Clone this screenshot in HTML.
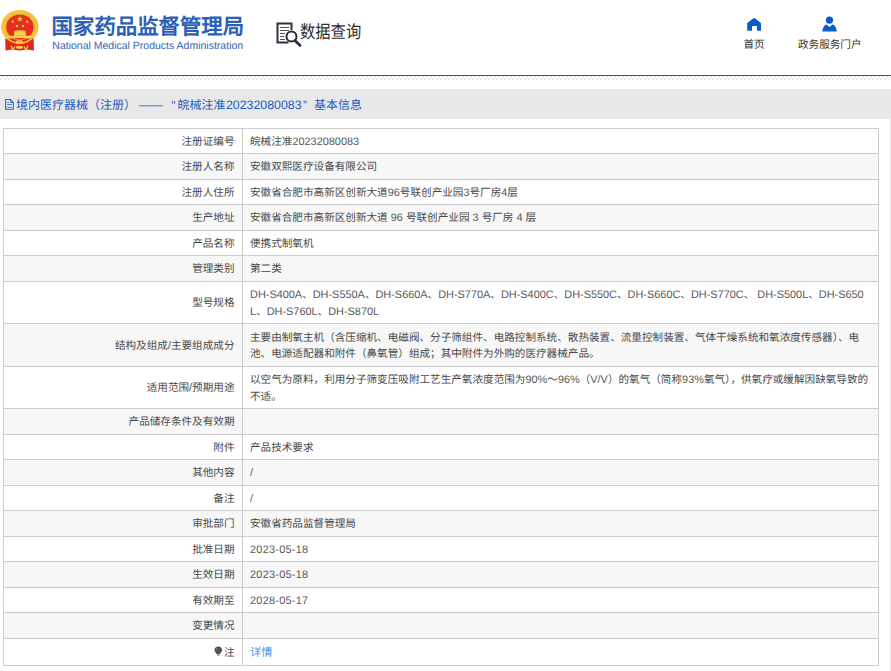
<!DOCTYPE html>
<html lang="zh-CN">
<head>
<meta charset="utf-8">
<style>
@font-face{font-family:"LSX";src:local("Liberation Sans");size-adjust:103%;unicode-range:U+0020-007E}
@font-face{font-family:"LSX";font-weight:bold;src:local("Liberation Sans Bold");size-adjust:103%;unicode-range:U+0020-007E}
*{margin:0;padding:0;box-sizing:border-box}
html,body{width:891px;height:671px;overflow:hidden;background:#fff}
body{position:relative;font-family:"LSX","Liberation Sans",sans-serif;color:#484848;text-rendering:geometricPrecision}
.abs{position:absolute}
#title{left:51.6px;top:13.9px;font-size:21.4px;font-weight:bold;color:#2c60b4;white-space:nowrap;line-height:26px}
#eng{left:52.3px;top:40.4px;font-size:10.2px;color:#3563b3;white-space:nowrap;line-height:12px}
#sj{left:300px;top:19.5px;font-size:17.8px;font-weight:300;color:#2c2c2c;line-height:24px;white-space:nowrap;transform:scaleX(0.86);transform-origin:0 0}
.nav{font-size:10.6px;font-weight:300;color:#333;line-height:14px;white-space:nowrap}
#blue{left:0;top:74.7px;width:891px;height:1.5px;background:#0b5ec1}
#hatch{left:0;top:76.4px;width:891px;height:3.7px;background:repeating-linear-gradient(135deg,transparent 0,transparent 2.15px,#dadada 2.15px,#dadada 2.83px)}
#bar{left:0;top:89px;width:891px;height:29.5px;background:#e8e8e8}
.cr{position:absolute;top:96.8px;font-size:12px;font-weight:300;color:#1a5cc0;line-height:16px;white-space:nowrap}
#cont{left:0;top:118.5px;width:891px;height:560px;border-right:1px solid #e4e4e4}
.row{position:absolute;left:3px;width:876px;border:1px solid #ccc;border-bottom:none}
.row.g{background:#f7f7f7}
.row .l{position:absolute;left:0;top:0;bottom:0;width:238px;display:flex;align-items:center;justify-content:flex-end;padding-right:7.5px;font-size:10.6px;font-weight:300;white-space:nowrap;line-height:16.8px}
.row .v{position:absolute;left:238px;top:0;bottom:0;right:0;border-left:1px solid #ccc;display:flex;align-items:center;padding-left:7px;font-size:10.6px;font-weight:300;line-height:16.8px;white-space:nowrap}
.row .v>div,.row .l>span{position:relative;top:1.4px}
.dt{letter-spacing:0.25px;color:#5a5a5a}
.lt{color:#5a5a5a}
.link{color:#4797f2;font-size:11.2px;position:relative;top:-0.4px}
.bulb{position:relative;top:1px;margin-right:1px}
#tbot{left:3px;top:665px;width:876px;height:1px;background:#ccc}
</style>
</head>
<body>
<svg class="abs" style="left:0;top:0" width="42" height="54" viewBox="0 0 42 54">
  <ellipse cx="19.85" cy="26.8" rx="18.8" ry="16.8" fill="#f4c23c"/>
  <path d="M5.2 38.6 L33.6 38.6 L34 50.6 L27.5 49.6 Q19.5 51.2 11.5 49.6 L5.6 50.6 Z" fill="#e4231c"/>
  <ellipse cx="19.9" cy="27" rx="13.8" ry="12.6" fill="#ea2c24"/>
  <ellipse cx="19.9" cy="27" rx="14.3" ry="13.1" fill="none" stroke="#e0a828" stroke-width="0.9"/>
  <polygon points="19.8,15.9 20.65,18.0 22.9,18.1 21.15,19.5 21.75,21.7 19.8,20.45 17.85,21.7 18.45,19.5 16.7,18.1 18.95,18.0" fill="#e6c83c"/>
  <circle cx="12.8" cy="21.7" r="1.25" fill="#dcc440"/><circle cx="27.1" cy="21.7" r="1.25" fill="#dcc440"/>
  <circle cx="17" cy="26" r="1.25" fill="#dcc440"/><circle cx="23" cy="26" r="1.25" fill="#dcc440"/>
  <rect x="14.1" y="31.2" width="11.7" height="4.6" fill="#f7d34c"/>
  <rect x="15.5" y="30.4" width="8.9" height="1.2" fill="#f5cf48"/>
  <rect x="8.9" y="35.8" width="22.2" height="2.3" fill="#f7d54a"/>
  <path d="M5.6 37.2 Q19.5 49.5 33.4 37.2" fill="none" stroke="#f2c43a" stroke-width="1.7"/>
  <ellipse cx="19.4" cy="42" rx="3.6" ry="2.1" fill="#f4c83e"/>
  <ellipse cx="19.4" cy="42" rx="1.6" ry="0.8" fill="#e8a830"/>
  <path d="M11 45.8 L13.2 49.8 L14.8 46.4 M28 45.8 L25.8 49.8 L24.2 46.4" fill="none" stroke="#f2d040" stroke-width="1.2"/>
  <ellipse cx="19.5" cy="47.2" rx="3.6" ry="1.5" fill="#f2d040"/>
</svg>
<div id="title" class="abs">国家药品监督管理局</div>
<div id="eng" class="abs">National Medical Products Administration</div>
<svg class="abs" style="left:275.7px;top:21.8px" width="27" height="26" viewBox="0 0 27 26">
  <path d="M12.5 20.5 H1.5 V1.5 H15.5 V8" fill="none" stroke="#2f2f3f" stroke-width="2"/>
  <path d="M4 5.5h9M4 8.5h9M4 11.5h5M4 14.5h4M4 17.5h5" stroke="#555" stroke-width="1.2"/>
  <circle cx="15.5" cy="14.5" r="5" fill="none" stroke="#2a2a3a" stroke-width="2"/>
  <path d="M19 18.5 L24 23.5" stroke="#2a2a3a" stroke-width="2.6" stroke-linecap="round"/>
</svg>
<div id="sj" class="abs">数据查询</div>
<svg class="abs" style="left:747px;top:17px" width="15" height="14" viewBox="0 0 15 14">
  <path d="M7.2 0.8 L14 6 V13.8 H10 V9 H5 V13.8 H0.2 V6 Z" fill="#0b5ec8"/>
</svg>
<div class="abs nav" style="left:743.5px;top:38px">首页</div>
<svg class="abs" style="left:822px;top:16px" width="16" height="16" viewBox="0 0 16 16">
  <circle cx="7.5" cy="4.2" r="3.6" fill="#0b5ec8"/>
  <path d="M0.3 15.5 Q1 9.5 4.5 8.6 L7.5 11 L10.5 8.6 Q14 9.5 14.8 15.5 Z" fill="#0b5ec8"/>
</svg>
<div class="abs nav" style="left:798px;top:38px">政务服务门户</div>
<div id="blue" class="abs"></div>
<div id="hatch" class="abs"></div>
<div id="bar" class="abs"></div>
<svg class="abs" style="left:4px;top:98px" width="11" height="13" viewBox="0 0 11 13">
  <path d="M1.6 1.5 H6.6 L9.3 4.3 V11.3 H1.6 Z" fill="none" stroke="#2563d0" stroke-width="1.05" stroke-linejoin="round"/>
  <path d="M6.6 1.5 V4.5 H9.3" fill="none" stroke="#2563d0" stroke-width="0.9"/>
  <path d="M3.1 4.4 H5 M3.1 6.5 H7.9 M3.1 9.3 H7.9" stroke="#3a6ad0" stroke-width="0.9"/>
</svg>
<div class="cr" style="left:16px">境内医疗器械（注册）</div>
<div class="cr" style="left:139px">——</div>
<div class="cr" style="left:171.5px">“</div>
<div class="cr" style="left:177.5px">皖械注准</div>
<div class="cr" style="left:226px">20232080083</div>
<div class="cr" style="left:303px">”</div>
<div class="cr" style="left:314px">基本信息</div>
<div id="cont" class="abs"></div>
<div class="row" style="top:128px;height:25px"><div class="l"><span>注册证编号</span></div><div class="v"><div>皖械注准<span class=lt>20232080083</span></div></div></div>
<div class="row g" style="top:153px;height:26px"><div class="l"><span>注册人名称</span></div><div class="v"><div>安徽双熙医疗设备有限公司</div></div></div>
<div class="row" style="top:179px;height:25px"><div class="l"><span>注册人住所</span></div><div class="v"><div>安徽省合肥市高新区创新大道<span class=lt>96</span>号联创产业园<span class=lt>3</span>号厂房<span class=lt>4</span>层</div></div></div>
<div class="row g" style="top:204px;height:26px"><div class="l"><span>生产地址</span></div><div class="v"><div>安徽省合肥市高新区创新大道<span class=lt> 96 </span>号联创产业园<span class=lt> 3 </span>号厂房<span class=lt> 4 </span>层</div></div></div>
<div class="row" style="top:230px;height:25px"><div class="l"><span>产品名称</span></div><div class="v"><div>便携式制氧机</div></div></div>
<div class="row g" style="top:255px;height:26px"><div class="l"><span>管理类别</span></div><div class="v"><div>第二类</div></div></div>
<div class="row" style="top:281px;height:42px"><div class="l"><span>型号规格</span></div><div class="v"><div><span class=lt>DH-S400A</span>、<span class=lt>DH-S550A</span>、<span class=lt>DH-S660A</span>、<span class=lt>DH-S770A</span>、<span class=lt>DH-S400C</span>、<span class=lt>DH-S550C</span>、<span class=lt>DH-S660C</span>、<span class=lt>DH-S770C</span>、<span class=lt> DH-S500L</span>、<span class=lt>DH-S650</span><br><span class=lt>L</span>、<span class=lt>DH-S760L</span>、<span class=lt>DH-S870L</span></div></div></div>
<div class="row g" style="top:323px;height:43px"><div class="l"><span>结构及组成/主要组成成分</span></div><div class="v"><div>主要由制氧主机（含压缩机、电磁阀、分子筛组件、电路控制系统、散热装置、流量控制装置、气体干燥系统和氧浓度传感器）、电<br>池、电源适配器和附件（鼻氧管）组成；其中附件为外购的医疗器械产品。</div></div></div>
<div class="row" style="top:366px;height:42px"><div class="l"><span>适用范围/预期用途</span></div><div class="v"><div>以空气为原料，利用分子筛变压吸附工艺生产氧浓度范围为<span class=lt>90%</span>～<span class=lt>96%</span>（<span class=lt>V/V</span>）的氧气（简称<span class=lt>93%</span>氧气），供氧疗或缓解因缺氧导致的<br>不适。</div></div></div>
<div class="row g" style="top:408px;height:26px"><div class="l"><span>产品储存条件及有效期</span></div><div class="v"><div></div></div></div>
<div class="row" style="top:434px;height:25px"><div class="l"><span>附件</span></div><div class="v"><div>产品技术要求</div></div></div>
<div class="row g" style="top:459px;height:26px"><div class="l"><span>其他内容</span></div><div class="v"><div><span class=lt>/</span></div></div></div>
<div class="row" style="top:485px;height:25px"><div class="l"><span>备注</span></div><div class="v"><div><span class=lt>/</span></div></div></div>
<div class="row g" style="top:510px;height:26px"><div class="l"><span>审批部门</span></div><div class="v"><div>安徽省药品监督管理局</div></div></div>
<div class="row" style="top:536px;height:25px"><div class="l"><span>批准日期</span></div><div class="v"><div><span class=dt>2023-05-18</span></div></div></div>
<div class="row g" style="top:561px;height:26px"><div class="l"><span>生效日期</span></div><div class="v"><div><span class=dt>2023-05-18</span></div></div></div>
<div class="row" style="top:587px;height:25px"><div class="l"><span>有效期至</span></div><div class="v"><div><span class=dt>2028-05-17</span></div></div></div>
<div class="row g" style="top:612px;height:26px"><div class="l"><span>变更情况</span></div><div class="v"><div></div></div></div>
<div class="row" style="top:638px;height:27px"><div class="l"><span><svg class="bulb" width="9" height="11" viewBox="0 0 9 11"><path d="M4.3 0.4 C6.6 0.4 8.1 2.1 8.1 4.1 C8.1 5.6 7.2 6.5 6.3 7.2 L6.1 8.2 H2.5 L2.3 7.2 C1.4 6.5 0.5 5.6 0.5 4.1 C0.5 2.1 2 0.4 4.3 0.4Z" fill="#505050"/><path d="M2.8 8.7 H5.8 L5.3 9.8 H3.3Z" fill="#777"/><path d="M2.2 4.1 C2.2 2.9 2.9 2.1 3.9 1.9" stroke="#aaa" stroke-width="0.7" fill="none"/></svg>注</span></div><div class="v"><div><span class=link>详情</span></div></div></div>
<div id="tbot" class="abs"></div>
</body>
</html>
